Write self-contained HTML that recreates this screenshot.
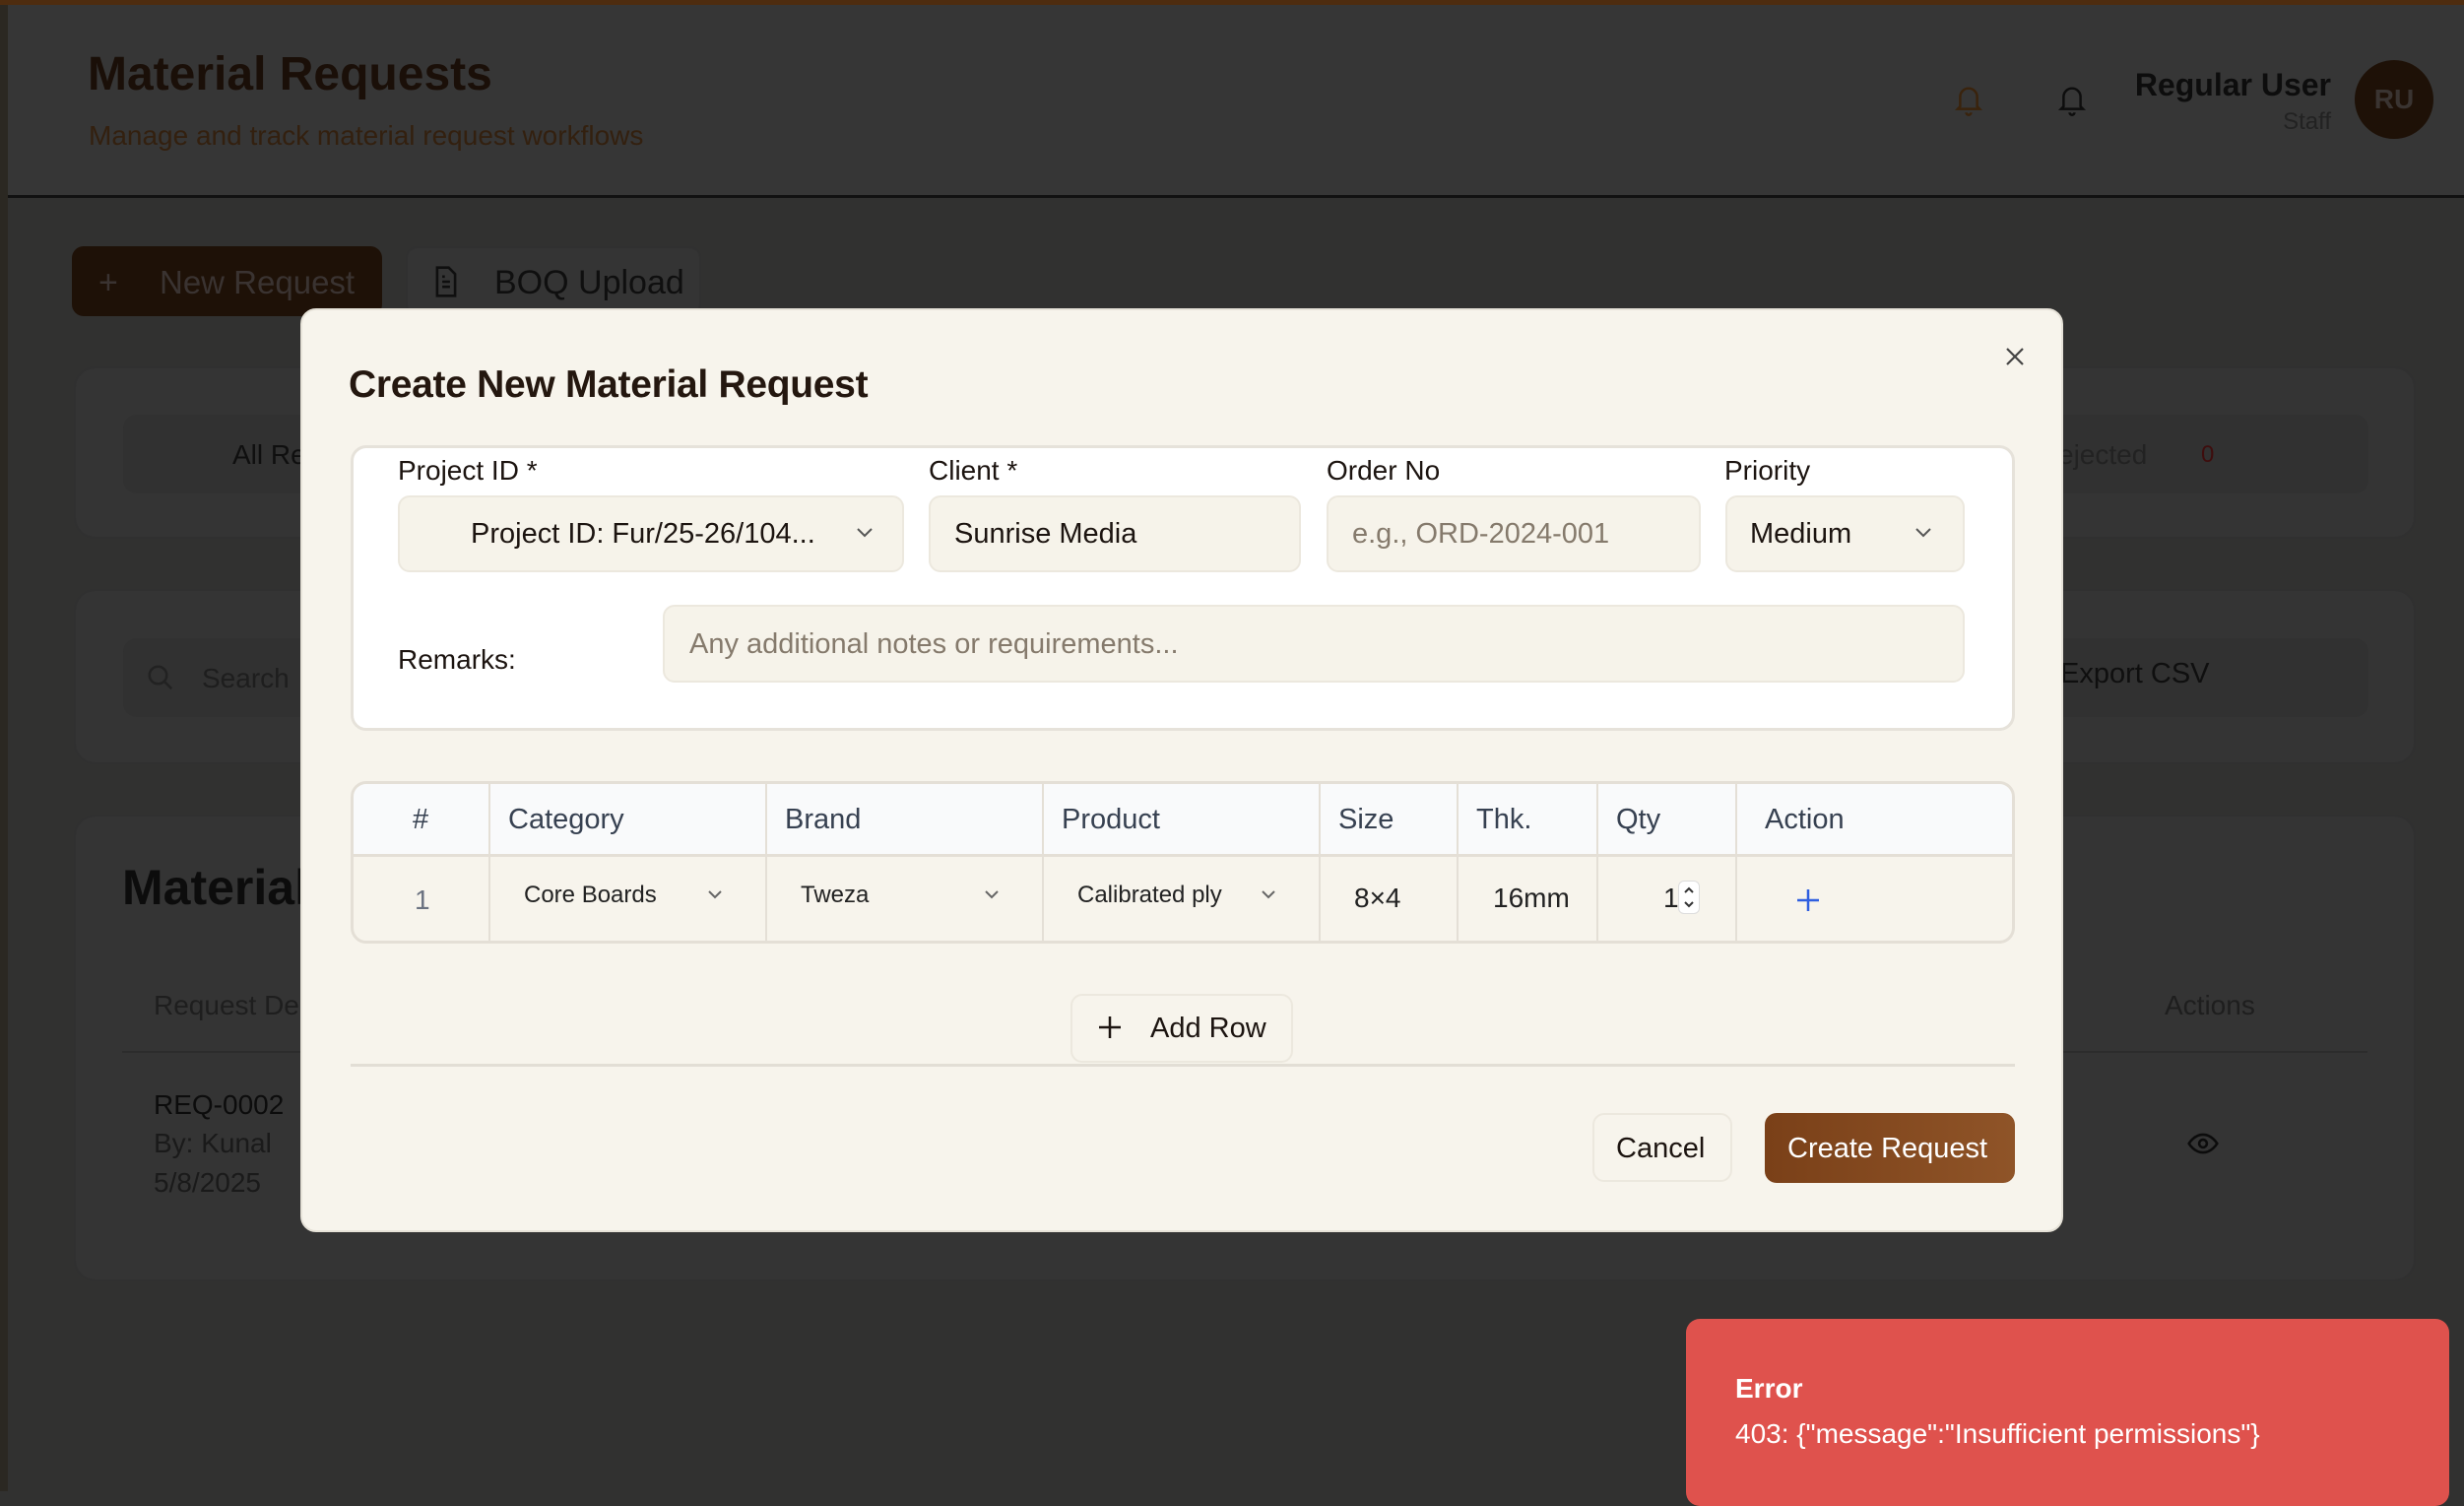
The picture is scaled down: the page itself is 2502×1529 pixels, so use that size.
<!DOCTYPE html>
<html><head><meta charset="utf-8"><style>
*{box-sizing:border-box;margin:0;padding:0}
body{width:2502px;height:1514px;overflow:hidden;background:#313130;font-family:"Liberation Sans",sans-serif;position:relative}
.a{position:absolute}
.t{position:absolute;white-space:nowrap;line-height:1}
.card{position:absolute;background:#343434;border:2px solid #303030;border-radius:22px}
.inp{position:absolute;background:#f6f3ea;border:2px solid #ece8de;border-radius:12px}
.lbl{position:absolute;font-size:28px;color:#1c1410;white-space:nowrap;line-height:1}
.th{position:absolute;font-size:29px;color:#374151;line-height:1;white-space:nowrap}
.vl{position:absolute;top:0;width:2px;height:100%;background:#e4dfd6}
</style></head><body>
<div class="a" style="left:0;top:0;width:2502px;height:5px;background:#4e2c0f"></div>
<div class="a" style="left:0;top:5px;width:8px;height:1509px;background:#2b2822"></div>
<div class="a" style="left:8px;top:5px;width:2494px;height:195px;background:#363636"></div>
<div class="a" style="left:8px;top:198px;width:2494px;height:3px;background:#111"></div>
<div class="t" style="left:89px;top:52px;font-size:48px;font-weight:bold;color:#1a0f08">Material Requests</div>
<div class="t" style="left:90px;top:124px;font-size:28px;color:#33200f">Manage and track material request workflows</div>
<svg class="a" style="left:1984px;top:86px" width="30" height="32" viewBox="0 0 24 26" fill="none" stroke="#3a230c" stroke-width="2"><path d="M5 18V10a7 7 0 0 1 14 0v8l2 2H3z"/><path d="M10 23a2 2 0 0 0 4 0"/></svg>
<svg class="a" style="left:2089px;top:86px" width="30" height="32" viewBox="0 0 24 26" fill="none" stroke="#0d0d0d" stroke-width="2"><path d="M5 18V10a7 7 0 0 1 14 0v8l2 2H3z"/><path d="M10 23a2 2 0 0 0 4 0"/></svg>
<div class="t" style="right:135px;top:70px;font-size:32px;font-weight:bold;color:#0d0d0d">Regular User</div>
<div class="t" style="right:135px;top:112px;font-size:24px;color:#222">Staff</div>
<div class="a" style="left:2391px;top:61px;width:80px;height:80px;border-radius:50%;background:#1e1107;color:#3a3431;font-weight:bold;font-size:28px;text-align:center;line-height:80px">RU</div>
<div class="a" style="left:73px;top:250px;width:315px;height:71px;border-radius:12px;background:#1e1107"></div>
<div class="t" style="left:100px;top:270px;font-size:34px;color:#3a3331">+</div>
<div class="t" style="left:162px;top:270px;font-size:33px;color:#3a3331">New Request</div>
<div class="a" style="left:412px;top:250px;width:300px;height:71px;border-radius:12px;background:#343434;border:2px solid #303030"></div>
<svg class="a" style="left:440px;top:270px" width="26" height="32" viewBox="0 0 20 24" fill="none" stroke="#0f0f0f" stroke-width="2"><path d="M3 1h9l5 5v17H3z"/><path d="M7 12h6M7 16h6M7 8h2"/></svg>
<div class="t" style="left:502px;top:270px;font-size:34px;color:#0f0f0f">BOQ Upload</div>
<div class="card" style="left:75px;top:372px;width:2378px;height:175px"></div>
<div class="a" style="left:125px;top:421px;width:2280px;height:80px;border-radius:14px;background:#313131"></div>
<div class="t" style="left:236px;top:448px;font-size:28px;color:#0f0f0f">All Re</div>
<div class="t" style="left:2090px;top:448px;font-size:28px;color:#222">ejected</div>
<div class="t" style="left:2235px;top:450px;font-size:24px;color:#3e0d0d">0</div>
<div class="card" style="left:75px;top:598px;width:2378px;height:178px"></div>
<div class="a" style="left:125px;top:648px;width:2280px;height:80px;border-radius:14px;background:#313131"></div>
<svg class="a" style="left:148px;top:673px" width="30" height="30" viewBox="0 0 24 24" fill="none" stroke="#222" stroke-width="2"><circle cx="10" cy="10" r="7"/><path d="M15 15l6 6"/></svg>
<div class="t" style="left:205px;top:675px;font-size:28px;color:#1e1e1e">Search</div>
<div class="t" style="left:2092px;top:670px;font-size:29px;color:#0f0f0f">Export CSV</div>
<div class="card" style="left:75px;top:827px;width:2378px;height:474px"></div>
<div class="t" style="left:124px;top:876px;font-size:50px;font-weight:bold;color:#0c0c0c">Material</div>
<div class="t" style="left:156px;top:1007px;font-size:28px;color:#1e1e1e">Request De</div>
<div class="t" style="left:2198px;top:1007px;font-size:28px;color:#1e1e1e">Actions</div>
<div class="a" style="left:124px;top:1067px;width:2280px;height:2px;background:#2c2c2c"></div>
<div class="t" style="left:156px;top:1108px;font-size:28px;color:#0c0c0c">REQ-0002</div>
<div class="t" style="left:156px;top:1147px;font-size:28px;color:#1a1a1a">By: Kunal</div>
<div class="t" style="left:156px;top:1187px;font-size:28px;color:#1a1a1a">5/8/2025</div>
<svg class="a" style="left:2221px;top:1148px" width="32" height="26" viewBox="0 0 24 20" fill="none" stroke="#0c0c0c" stroke-width="2"><path d="M1 10s4-7 11-7 11 7 11 7-4 7-11 7S1 10 1 10z"/><circle cx="12" cy="10" r="3"/></svg>

<div class="a" style="left:305px;top:313px;width:1790px;height:938px;background:#f7f4ec;border-radius:16px;border:2px solid #e6e2d8"></div>
<div class="t" style="left:354px;top:371px;font-size:39px;font-weight:bold;color:#24170f;letter-spacing:-0.3px">Create New Material Request</div>
<svg class="a" style="left:2034px;top:350px" width="24" height="24" viewBox="0 0 24 24" stroke="#444" stroke-width="2.2"><path d="M4 4l16 16M20 4L4 20"/></svg>
<div class="a" style="left:356px;top:452px;width:1690px;height:290px;background:#fff;border:3px solid #e6e2da;border-radius:16px"></div>
<div class="lbl" style="left:404px;top:464px">Project ID *</div>
<div class="lbl" style="left:943px;top:464px">Client *</div>
<div class="lbl" style="left:1347px;top:464px">Order No</div>
<div class="lbl" style="left:1751px;top:464px">Priority</div>
<div class="inp" style="left:404px;top:503px;width:514px;height:78px"></div>
<div class="t" style="left:478px;top:528px;font-size:29px;color:#1c1410">Project ID: Fur/25-26/104...</div>
<svg class="a" style="left:869px;top:535px" width="18" height="12" viewBox="0 0 18 12" fill="none" stroke="#555" stroke-width="2"><path d="M2 2l7 7 7-7"/></svg>
<div class="inp" style="left:943px;top:503px;width:378px;height:78px"></div>
<div class="t" style="left:969px;top:528px;font-size:29px;color:#1c1410">Sunrise Media</div>
<div class="inp" style="left:1347px;top:503px;width:380px;height:78px"></div>
<div class="t" style="left:1373px;top:528px;font-size:29px;color:#857a6c">e.g., ORD-2024-001</div>
<div class="inp" style="left:1752px;top:503px;width:243px;height:78px"></div>
<div class="t" style="left:1777px;top:528px;font-size:29px;color:#1c1410">Medium</div>
<svg class="a" style="left:1944px;top:535px" width="18" height="12" viewBox="0 0 18 12" fill="none" stroke="#555" stroke-width="2"><path d="M2 2l7 7 7-7"/></svg>
<div class="lbl" style="left:404px;top:656px">Remarks:</div>
<div class="inp" style="left:673px;top:614px;width:1322px;height:79px"></div>
<div class="t" style="left:700px;top:640px;font-size:29px;color:#857a6c">Any additional notes or requirements...</div>

<div class="a" style="left:356px;top:793px;width:1690px;height:165px;background:#f7f4ec;border:3px solid #e4dfd6;border-radius:16px;overflow:hidden">
<div class="a" style="left:0;top:0;width:100%;height:71px;background:#f9fafb"></div>
<div class="a" style="left:0;top:71px;width:100%;height:3px;background:#e4dfd6"></div>
<div class="vl" style="left:137px"></div><div class="vl" style="left:418px"></div><div class="vl" style="left:699px"></div><div class="vl" style="left:980px"></div><div class="vl" style="left:1120px"></div><div class="vl" style="left:1262px"></div><div class="vl" style="left:1403px"></div>
<div class="th" style="left:60px;top:22px">#</div>
<div class="th" style="left:157px;top:22px">Category</div>
<div class="th" style="left:438px;top:22px">Brand</div>
<div class="th" style="left:719px;top:22px">Product</div>
<div class="th" style="left:1000px;top:22px">Size</div>
<div class="th" style="left:1140px;top:22px">Thk.</div>
<div class="th" style="left:1282px;top:22px">Qty</div>
<div class="th" style="left:1433px;top:22px">Action</div>
<div class="t" style="left:62px;top:104px;font-size:28px;color:#6b7280">1</div>
<div class="t" style="left:173px;top:101px;font-size:24px;color:#222">Core Boards</div>
<div class="t" style="left:454px;top:101px;font-size:24px;color:#222">Tweza</div>
<div class="t" style="left:735px;top:101px;font-size:24px;color:#222">Calibrated ply</div>
<svg class="a" style="left:359px;top:107px" width="16" height="11" viewBox="0 0 16 11" fill="none" stroke="#666" stroke-width="2"><path d="M2 2l6 6 6-6"/></svg>
<svg class="a" style="left:640px;top:107px" width="16" height="11" viewBox="0 0 16 11" fill="none" stroke="#666" stroke-width="2"><path d="M2 2l6 6 6-6"/></svg>
<svg class="a" style="left:921px;top:107px" width="16" height="11" viewBox="0 0 16 11" fill="none" stroke="#666" stroke-width="2"><path d="M2 2l6 6 6-6"/></svg>
<div class="t" style="left:1016px;top:102px;font-size:28px;color:#222">8×4</div>
<div class="t" style="left:1157px;top:102px;font-size:28px;color:#222">16mm</div>
<div class="t" style="left:1330px;top:102px;font-size:28px;color:#222">1</div>
<div class="a" style="left:1345px;top:98px;width:22px;height:34px;background:#fff;border-radius:6px;border:1px solid #ddd"></div>
<svg class="a" style="left:1348px;top:101px" width="16" height="28" viewBox="0 0 16 28" fill="none" stroke="#333" stroke-width="2"><path d="M4 9l4-4 4 4M4 19l4 4 4-4"/></svg>
<svg class="a" style="left:1464px;top:105px" width="26" height="26" viewBox="0 0 26 26" stroke="#2f5fe0" stroke-width="2.5"><path d="M13 2v22M2 13h22"/></svg>
</div>

<div class="a" style="left:1087px;top:1009px;width:226px;height:70px;background:#f7f4ec;border:2px solid #ece8de;border-radius:12px"></div>
<svg class="a" style="left:1114px;top:1030px" width="26" height="26" viewBox="0 0 26 26" stroke="#1c1410" stroke-width="2.5"><path d="M13 2v22M2 13h22"/></svg>
<div class="t" style="left:1168px;top:1030px;font-size:29px;color:#1c1410">Add Row</div>
<div class="a" style="left:356px;top:1080px;width:1690px;height:3px;background:#e2ded5"></div>
<div class="a" style="left:1617px;top:1130px;width:142px;height:70px;background:#f7f4ec;border:2px solid #ece8de;border-radius:12px"></div>
<div class="t" style="left:1641px;top:1152px;font-size:29px;color:#1c1410">Cancel</div>
<div class="a" style="left:1792px;top:1130px;width:254px;height:71px;border-radius:12px;background:linear-gradient(90deg,#7a4018,#8f5428)"></div>
<div class="t" style="left:1815px;top:1152px;font-size:29px;color:#fff">Create Request</div>

<div class="a" style="left:1712px;top:1339px;width:775px;height:190px;background:#df524d;border-radius:14px"></div>
<div class="t" style="left:1762px;top:1396px;font-size:28px;font-weight:bold;color:#fff">Error</div>
<div class="t" style="left:1762px;top:1442px;font-size:28px;color:#fff">403: {"message":"Insufficient permissions"}</div>
</body></html>
